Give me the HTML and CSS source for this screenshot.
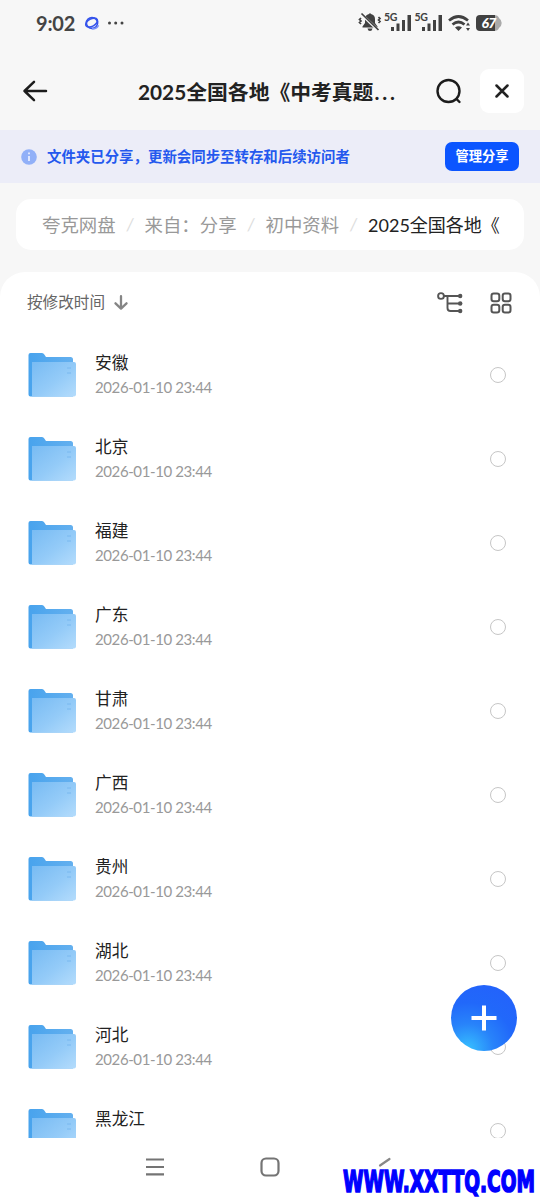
FILE: index.html
```html
<!DOCTYPE html>
<html lang="zh-CN">
<head>
<meta charset="utf-8">
<title>2025全国各地《中考真题</title>
<link rel="stylesheet" href="styles.css">
</head>
<body>
<svg class="defs" width="0" height="0">
  <defs>
    <linearGradient id="back" x1="0" y1="0" x2="1" y2="0"><stop offset="0" stop-color="#48a3ed"/><stop offset="1" stop-color="#64b0ef"/></linearGradient>
    <linearGradient id="front" x1="0" y1="0" x2="1" y2="1"><stop offset="0" stop-color="#78bbf3"/><stop offset=".55" stop-color="#94cbf8"/><stop offset="1" stop-color="#b4dcfc"/></linearGradient>
    <symbol id="folder" viewBox="0 0 48 46">
      <path fill="url(#back)" d="M2.500 1H14q1.600 0 2.300 1.500L18 5h24.500q2.500 0 2.500 2.500V44.500H2.500Q.5 44.500.5 42.500V3Q.5 1 2.500 1z"/>
      <path fill="url(#front)" d="M4 10h42q2 0 2 2v30.500q0 2-2 2H4z"/>
      <path d="M39 16h4M39 21h4" stroke="#78b8ef"/>
    </symbol>
  </defs>
</svg>
<div class="screen">
  <div class="status">
    <span class="time">9:02</span>
    <svg class="planet" width="16" height="16" viewBox="0 0 16 16" fill="none" stroke="#3654ec" stroke-width="1.600"><ellipse cx="8" cy="8" rx="5.600" ry="5.400"/><ellipse cx="7.600" cy="7.600" rx="6.400" ry="3.700" transform="rotate(-28 7.600 7.600)"/><path d="M8 13.800q5 .5 6.500-3.500" stroke="#7d92fa"/></svg>
    <svg class="dots" width="18" height="6" viewBox="0 0 18 6" fill="#444"><circle cx="2.500" cy="3" r="1.500"/><circle cx="8.700" cy="3" r="1.500"/><circle cx="15" cy="3" r="1.500"/></svg>
    <svg class="indicators" width="150" height="26" viewBox="0 0 150 26" fill="#414141">
      <path d="M5.500 16.500 8 13V9q0-4 4-5l1-1 1 1q4 1 4 5v4l2.500 3.500v1H5.500zM10.500 18.500h5q-.5 2.500-2.500 2.500t-2.500-2.500z"/>
      <path d="M3 3 22 21" stroke="#f7f7f7" stroke-width="3"/>
      <path d="m4.500 3.500 17 16.500M4 8l-1.500 1.500L4 11l-1.500 1.500L4 14M21.500 7 23 8.500 21.500 10l1.500 1.500-1.500 1.500" fill="none" stroke="#414141" stroke-width="1.700"/>
      <text class="fiveg" x="27" y="11">5G</text>
      <path d="M34 17h3v4h-3zM39.500 13.500h3V21h-3zM45 10h3v11h-3zM50.500 5h3.500v16h-3.500z"/>
      <text class="fiveg" x="57.500" y="11">5G</text>
      <path d="M65 17h3v4h-3zM70.500 13.500h3V21h-3zM76 10h3v11h-3zM81.500 5H85v16h-3.500z"/>
      <path d="M92 10.500q9.500-8 19 0M95.500 14.500q6-5 12 0" fill="none" stroke="#414141" stroke-width="2.700"/>
      <path d="M98 17.500q3.500-2.500 7 0L101.500 21zM109 15.500l2-3 2 3zM109 18h4l-2 3z"/>
      <path d="M137 5q4 0 5 3 2.700 2 2.700 5t-2.700 5q-1 3-5 3h-5V5z" fill="#aaa"/>
      <path d="M123 5h15v16h-15q-4 0-4-4V9q0-4 4-4z"/>
      <text class="charge" x="124.500" y="18.300">67</text>
    </svg>
  </div>

  <header class="header">
    <svg class="back" width="26" height="24" viewBox="0 0 26 24" fill="none" stroke="#1c1c1c" stroke-width="2.500" stroke-linecap="round" stroke-linejoin="round"><path d="M24 12H2.500M12 2.800 2.500 12l9.500 9.200"/></svg>
    <h1 class="title"><b>2025全国各地《中考真题</b><span class="more">...</span></h1>
    <svg class="search" width="28" height="28" viewBox="0 0 28 28" fill="none" stroke="#1c1c1c" stroke-width="2.400" stroke-linecap="round"><circle cx="13.500" cy="14" r="11"/><path d="m21.500 22 3 3"/></svg>
    <div class="close"><svg width="14" height="14" viewBox="0 0 14 14" stroke="#222" stroke-width="2.500" stroke-linecap="round"><path d="m1.500 1.500 11 11m0-11-11 11"/></svg></div>
  </header>

  <div class="banner">
    <svg width="16" height="16" viewBox="0 0 16 16"><circle cx="8" cy="8" r="7.800" fill="#91b0f8"/><path d="M8 7v5M8 3.500v1.700" stroke="#e6edff" stroke-width="1.800"/></svg>
    <span class="notice">文件夹已分享，更新会同步至转存和后续访问者</span>
    <span class="manage">管理分享</span>
  </div>

  <nav class="crumbs">
    <span>夸克网盘</span><i>/</i><span>来自：分享</span><i>/</i><span>初中资料</span><i>/</i><span class="current">2025全国各地《</span>
  </nav>

  <main class="sheet">
    <div class="toolbar">
      <span class="sort">按修改时间</span>
      <svg class="down" width="14" height="15" viewBox="0 0 14 15" fill="none" stroke="#858585" stroke-width="2.300" stroke-linecap="round" stroke-linejoin="round"><path d="M7 1.200v12M1.500 8.300 7 13.600l5.500-5.300"/></svg>
      <svg class="tree" width="26" height="22" viewBox="0 0 26 22" fill="none" stroke="#555" stroke-width="1.900"><circle cx="4" cy="4" r="2.900"/><path d="M7 4h16M10.500 4v12q0 3 3 3H23M10.500 11.500H23"/><g fill="#555" stroke="none"><circle cx="23.200" cy="4" r="2.200"/><circle cx="23.200" cy="11.500" r="2.200"/><circle cx="23.200" cy="19" r="2.200"/></g></svg>
      <svg class="grid" width="22" height="22" viewBox="0 0 22 22" fill="none" stroke="#555" stroke-width="2"><rect x="1.500" y="1.500" width="7.800" height="7.800" rx="2.300"/><rect x="12.700" y="1.500" width="7.800" height="7.800" rx="2.300"/><rect x="1.500" y="12.700" width="7.800" height="7.800" rx="2.300"/><rect x="12.700" y="12.700" width="7.800" height="7.800" rx="2.300"/></svg>
    </div>
    <div class="list">
      <div class="row"><svg class="folder"><use href="#folder"/></svg><div class="info"><div class="name">安徽</div><div class="date">2026-01-10 23:44</div></div><span class="radio"></span></div>
      <div class="row"><svg class="folder"><use href="#folder"/></svg><div class="info"><div class="name">北京</div><div class="date">2026-01-10 23:44</div></div><span class="radio"></span></div>
      <div class="row"><svg class="folder"><use href="#folder"/></svg><div class="info"><div class="name">福建</div><div class="date">2026-01-10 23:44</div></div><span class="radio"></span></div>
      <div class="row"><svg class="folder"><use href="#folder"/></svg><div class="info"><div class="name">广东</div><div class="date">2026-01-10 23:44</div></div><span class="radio"></span></div>
      <div class="row"><svg class="folder"><use href="#folder"/></svg><div class="info"><div class="name">甘肃</div><div class="date">2026-01-10 23:44</div></div><span class="radio"></span></div>
      <div class="row"><svg class="folder"><use href="#folder"/></svg><div class="info"><div class="name">广西</div><div class="date">2026-01-10 23:44</div></div><span class="radio"></span></div>
      <div class="row"><svg class="folder"><use href="#folder"/></svg><div class="info"><div class="name">贵州</div><div class="date">2026-01-10 23:44</div></div><span class="radio"></span></div>
      <div class="row"><svg class="folder"><use href="#folder"/></svg><div class="info"><div class="name">湖北</div><div class="date">2026-01-10 23:44</div></div><span class="radio"></span></div>
      <div class="row"><svg class="folder"><use href="#folder"/></svg><div class="info"><div class="name">河北</div><div class="date">2026-01-10 23:44</div></div><span class="radio"></span></div>
      <div class="row"><svg class="folder"><use href="#folder"/></svg><div class="info"><div class="name">黑龙江</div></div><span class="radio"></span></div>
    </div>
  </main>

  <footer class="navbar">
    <svg width="20" height="20" viewBox="0 0 20 20" stroke="#747474" stroke-width="2.200"><path d="M1 2.500h18M1 10h18M1 17.300h18"/></svg>
    <svg width="20" height="20" viewBox="0 0 20 20" fill="none" stroke="#747474" stroke-width="2.200"><rect x="1.500" y="1.500" width="17" height="17" rx="4.500"/></svg>
    <svg width="20" height="20" viewBox="0 0 20 20" fill="none" stroke="#888" stroke-width="2.200" stroke-linecap="round"><path d="M14.500 2 5 8.500"/></svg>
  </footer>

  <div class="fab"><svg width="26" height="26" viewBox="0 0 26 26" stroke="#fff" stroke-width="4"><path d="M13 .5v25M.5 13h25"/></svg></div>
  <svg class="watermark" width="200" height="40" viewBox="0 0 200 40"><text x="4" y="31.500" textLength="192" lengthAdjust="spacingAndGlyphs">WWW.XXTTQ.COM</text></svg>
</div>
</body>
</html>
```

FILE: styles.css
```css
* { box-sizing: border-box; }
body { margin: 0; font-family: Lato, "Noto Sans CJK SC", sans-serif; }
svg { display: block; flex: none; }
.defs { position: absolute; }
.screen { position: relative; width: 540px; height: 1200px; overflow: hidden; background: #f7f7f7; display: flex; flex-direction: column; white-space: nowrap; }
.status { height: 52px; padding: 0 31px 6px 36px; display: flex; align-items: center; flex: none; }
.time { font-size: 20px; font-weight: 700; color: #444; width: 39px; letter-spacing: -.2px; }
.planet { margin-left: 9px; }
.dots { margin-left: 7px; }
.indicators { margin-left: auto; margin-right: 2px; }
.fiveg { font-size: 10.500px; font-weight: 700; letter-spacing: -.3px; }
.charge { font-size: 14px; font-weight: 900; font-style: italic; fill: #fff; letter-spacing: -.6px; }
.header { height: 78px; padding: 0 16px 0 22px; display: flex; align-items: center; flex: none; }
.title { margin: 2px 0 0 90px; width: 298px; font-size: 20.800px; line-height: 30px; font-weight: 400; color: #222; }
.title b { font-weight: 700; }
.more { font-weight: 700; letter-spacing: 2.800px; margin-left: 1px; }
.search { margin-right: 17px; }
.close { width: 44px; height: 44px; border-radius: 9px; background: #fff; display: flex; align-items: center; justify-content: center; }
.banner { height: 53px; flex: none; padding: 0 21px; background: #ecedf8; display: flex; align-items: center; }
.notice { margin-left: 10px; font-size: 14.430px; font-weight: 700; color: #2459ee; line-height: 20px; }
.manage { margin-left: auto; width: 74px; height: 29px; border-radius: 7px; background: #0b55ff; color: #fff; font-size: 13.300px; font-weight: 700; line-height: 28px; text-align: center; }
.crumbs { height: 51px; margin: 16px 16px 0; padding: 0 20px 1px 26px; border-radius: 15px; background: #fff; display: flex; align-items: center; flex: none; font-size: 18.400px; color: #999; overflow: hidden; }
.crumbs i { width: 29px; text-align: center; font-size: 17px; color: #ddd; }
.crumbs .current { color: #222; font-size: 18px; width: 136px; overflow: hidden; }
.sheet { flex: 1; min-height: 0; margin-top: 22px; border-radius: 25px 25px 0 0; background: #fff; display: flex; flex-direction: column; }
.toolbar { height: 61px; padding: 0 28px 0 27px; display: flex; align-items: center; flex: none; }
.sort { font-size: 15.600px; color: #666; padding-bottom: 3px; }
.down { margin-left: 9px; }
.tree { margin-left: auto; }
.grid { margin-left: 27px; }
.list { flex: 1; min-height: 0; overflow: hidden; }
.row { height: 84px; padding: 17px 34px 0 28px; display: flex; align-items: flex-start; }
.folder { width: 48px; height: 46px; margin-top: 2px; }
.info { margin-left: 19px; flex: 1; }
.name { font-size: 16.700px; line-height: 27px; color: #222; }
.date { font-size: 15px; line-height: 20px; letter-spacing: -.4px; color: #999; }
.radio { width: 16px; height: 16px; margin-top: 17px; border: 1.500px solid #c6c6c6; border-radius: 50%; }
.navbar { height: 62px; padding: 0 145px 4px; background: #fff; display: flex; align-items: center; justify-content: space-between; flex: none; }
.fab { position: absolute; left: 451px; top: 985px; width: 66px; height: 66px; border-radius: 50%; background: radial-gradient(circle at 25% 98%, #37c1ff 0, #2883fa 32%, #2168fa 58%, #2460fc 100%); display: flex; align-items: center; justify-content: center; }
.watermark { position: absolute; left: 339px; top: 1160px; overflow: visible; }
.watermark text { font-family: "DejaVu Sans Condensed", "DejaVu Sans", sans-serif; font-size: 31px; font-weight: 700; fill: #00f; stroke: #00f; stroke-width: 1.600px; }
```
